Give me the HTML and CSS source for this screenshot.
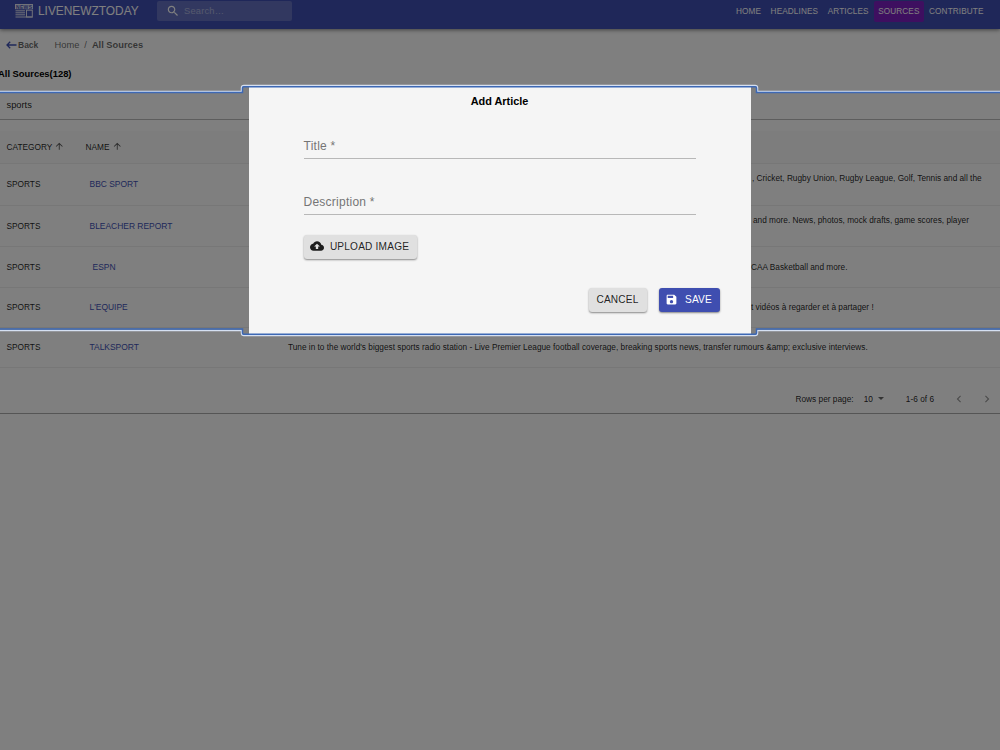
FILE: index.html
```html
<!DOCTYPE html>
<html lang="en">
<head>
    <meta charset="UTF-8">
    <meta name="viewport" content="width=device-width, initial-scale=1.0">
    <title>LIVENEWZTODAY - All Sources</title>
    <link rel="stylesheet" href="styles.css">
</head>
<body>
    <header class="navbar">
        <svg class="logo" viewBox="0 0 18 14">
            <rect x="0" y="0" width="18" height="5.2" fill="#fff"/>
            <text x="1" y="4.6" class="logo-text" textLength="16">NEWS</text>
            <path d="M0.5 6.8h9.5M0.5 8.8h9.5M0.5 10.8h9.5M0.5 13h17" stroke="#fff" stroke-width="1"/>
            <rect x="11.5" y="6.2" width="5.8" height="6.8" fill="none" stroke="#fff" stroke-width="1"/>
        </svg>
        <span class="brand">LIVENEWZTODAY</span>
        <div class="search">
            <svg class="search-icon" viewBox="0 0 24 24"><path d="M15.5 14h-.79l-.28-.27C15.41 12.59 16 11.11 16 9.5 16 5.91 13.09 3 9.5 3S3 5.91 3 9.5 5.91 16 9.5 16c1.61 0 3.09-.59 4.23-1.57l.27.28v.79l5 4.99L20.49 19l-4.99-5zm-6 0C7.01 14 5 11.99 5 9.5S7.01 5 9.5 5 14 7.01 14 9.5 11.99 14 9.5 14z"/></svg>
            <span>Search…</span>
        </div>
        <nav class="nav-links">
            <a>HOME</a>
            <a>HEADLINES</a>
            <a>ARTICLES</a>
            <a class="active">SOURCES</a>
            <a>CONTRIBUTE</a>
        </nav>
    </header>

    <div class="breadcrumbs">
        <svg class="back-icon" viewBox="0 0 11 8"><path d="M4.2 .8L1 4l3.2 3.2M1 4h9.5" fill="none" stroke="#3f51b5" stroke-width="1.3"/></svg>
        <b class="back">Back</b>
        <span class="crumb">Home</span>
        <span class="slash">/</span>
        <b class="current">All Sources</b>
    </div>
    <h1 class="page-title">All Sources(128)</h1>

    <main class="sources">
        <div class="filter">sports</div>
        <div class="row head">
            <div>CATEGORY <svg class="sort" viewBox="0 0 24 24"><path d="M4 12l1.41 1.41L11 7.83V20h2V7.83l5.58 5.59L20 12l-8-8-8 8z"/></svg></div>
            <div class="name-head">NAME <svg class="sort" viewBox="0 0 24 24"><path d="M4 12l1.41 1.41L11 7.83V20h2V7.83l5.58 5.59L20 12l-8-8-8 8z"/></svg></div>
            <div></div>
        </div>
        <div class="row bbc">
            <div>SPORTS</div>
            <a>BBC SPORT</a>
            <p class="end-bbc">, Cricket, Rugby Union, Rugby League, Golf, Tennis and all the</p>
        </div>
        <div class="row bleacher">
            <div>SPORTS</div>
            <a>BLEACHER REPORT</a>
            <p class="end-bleacher">and more. News, photos, mock drafts, game scores, player</p>
        </div>
        <div class="row espn">
            <div>SPORTS</div>
            <a>ESPN</a>
            <p class="end-espn">CAA Basketball and more.</p>
        </div>
        <div class="row equipe">
            <div>SPORTS</div>
            <a>L'EQUIPE</a>
            <p class="end-equipe">t vidéos à regarder et à partager !</p>
        </div>
        <div class="row talk">
            <div>SPORTS</div>
            <a>TALKSPORT</a>
            <p>Tune in to the world's biggest sports radio station - Live Premier League football coverage, breaking sports news, transfer rumours &amp;amp; exclusive interviews.</p>
        </div>
        <div class="pagination">
            <span class="per-page">Rows per page:</span>
            <span class="count">10</span>
            <svg class="caret" viewBox="0 0 10 5"><path d="M0 0l5 5 5-5z"/></svg>
            <span class="range">1-6 of 6</span>
            <svg class="chevron" viewBox="0 0 24 24"><path d="M15.41 16.59L10.83 12l4.58-4.59L14 6l-6 6 6 6z"/></svg>
            <svg class="chevron" viewBox="0 0 24 24"><path d="M8.59 16.59L13.17 12 8.59 7.41 10 6l6 6-6 6z"/></svg>
        </div>
    </main>

    <div class="backdrop">
        <div class="dialog">
            <h2>Add Article</h2>
            <div class="field">Title *</div>
            <div class="field description">Description *</div>
            <button class="btn upload">
                <svg viewBox="0 0 24 24"><path d="M19.35 10.04C18.67 6.59 15.64 4 12 4 9.11 4 6.6 5.64 5.35 8.04 2.34 8.36 0 10.91 0 14c0 3.31 2.69 6 6 6h13c2.76 0 5-2.24 5-5 0-2.64-2.05-4.78-4.65-4.96zM14 13v4h-4v-4H7l5-5 5 5h-3z"/></svg>
                UPLOAD IMAGE
            </button>
            <div class="actions">
                <button class="btn cancel">CANCEL</button>
                <button class="btn save">
                    <svg viewBox="0 0 24 24"><path d="M17 3H5c-1.11 0-2 .9-2 2v14c0 1.1.89 2 2 2h14c1.1 0 2-.9 2-2V7l-4-4zm-5 16c-1.66 0-3-1.34-3-3s1.34-3 3-3 3 1.34 3 3-1.34 3-3 3zm3-10H5V5h10v4z"/></svg>
                    SAVE
                </button>
            </div>
        </div>
        <!-- focus ring around the modal -->
        <svg class="focus-ring" viewBox="0 0 1000 750">
            <path class="ring-light" d="M-5 91.5H241.5V88q0-2.5 2.5-2.5H755q2.5 0 2.5 2.5V91.5H1005V330.5H757.5V333q0 2.5-2.5 2.5H244q-2.5 0-2.5-2.5V330.5H-5z"/>
            <path class="ring-blue" d="M-5 92.5H242.5V88q0-1.2 1.2-1.2H755.3q1.2 0 1.2 1.2V92.5H1005V329H756.5V333q0 1.2-1.2 1.2H243.7q-1.2 0-1.2-1.2V329H-5z"/>
        </svg>
    </div>
</body>
</html>
```
FILE: styles.css
```css
* {
    box-sizing: border-box;
}
body {
    margin: 0;
    height: 750px;
    overflow: hidden;
    background: #fff;
    font-family: "Liberation Sans", Arial, sans-serif;
    color: rgba(0,0,0,0.87);
}
.navbar {
    display: flex;
    align-items: center;
    height: 29px;
    padding: 0 13px 7px 15px;
    background: #3f4eb2;
    color: #fff;
    box-shadow: 0 1px 4px rgba(0,0,0,0.5);
}
.logo {
    width: 18px;
    height: 14px;
    opacity: 0.85;
}
.logo-text {
    font-size: 5px;
    font-weight: bold;
    fill: #3f4eb2;
}
.brand {
    width: 119px;
    margin-left: 5px;
    font-size: 11.9px;
}
.search {
    display: flex;
    align-items: center;
    width: 135px;
    height: 20px;
    padding-left: 10px;
    border-radius: 2px;
    background: #6471c0;
    font-size: 9.3px;
    letter-spacing: 0.2px;
}
.search span {
    opacity: 0.45;
}
.search-icon {
    width: 14px;
    height: 14px;
    margin: 0 4px 0 -1px;
    fill: #fff;
}
.nav-links {
    display: flex;
    margin-left: auto;
    font-size: 8.2px;
    letter-spacing: 0.12px;
}
.nav-links a {
    padding: 6px 4px;
    margin-left: 1.6px;
}
.nav-links a:last-child {
    padding-right: 3.5px;
}
.nav-links .active {
    margin-right: -1px;
    padding-right: 5px;
    border-radius: 2px;
    background: #7d1fc0;
}
.breadcrumbs {
    display: flex;
    align-items: center;
    height: 32px;
    padding-left: 6px;
    font-size: 9.3px;
    color: rgba(0,0,0,0.6);
}
.back-icon {
    width: 11px;
    height: 8px;
    margin-right: 1px;
}
.back {
    width: 36.5px;
    font-size: 8.5px;
}
.slash {
    margin: 0 5px;
}
.page-title {
    height: 31px;
    margin: 0 0 0 -2px;
    font-size: 9.4px;
    line-height: 26px;
    color: #000;
}
.sources {
    height: 322px;
    border-bottom: 1px solid #aaa;
    font-size: 8.3px;
}
.filter {
    height: 28px;
    padding-left: 6.5px;
    border-bottom: 1px solid #bbb;
    font-size: 9.3px;
    line-height: 26px;
}
.row {
    display: grid;
    grid-template-columns: 83px 198.5px 1fr;
    align-items: center;
    padding-left: 6.5px;
    border-bottom: 1px solid #efefef;
}
.row div,
.row a {
    padding-bottom: 2px;
}
.row a {
    font-size: 8.45px;
    color: #3f51b5;
}
.row p {
    margin: 0;
    font-size: 8.27px;
    white-space: nowrap;
}
.head {
    height: 33px;
    margin-top: 11px;
    background: #fafafa;
}
.name-head {
    margin-left: -4px;
}
.sort {
    width: 10.5px;
    height: 10.5px;
    vertical-align: -2px;
    fill: #555;
}
.bbc {
    height: 42px;
}
.bleacher,
.espn {
    height: 41px;
}
.equipe,
.talk {
    height: 40px;
}
.bleacher div,
.bleacher a,
.espn div,
.espn a {
    padding-bottom: 0;
}
.espn a {
    padding-left: 3px;
}
.row .end-bbc {
    margin: 0 0 12px 464px;
}
.row .end-bleacher {
    margin: 0 0 12px 465px;
}
.row .end-espn,
.row .end-equipe {
    margin-left: 463px;
}
.pagination {
    display: flex;
    align-items: center;
    justify-content: flex-end;
    height: 45px;
    padding: 16px 6px 0 0;
}
.count {
    margin: 0 5px 0 10px;
}
.caret {
    width: 6px;
    height: 3px;
    fill: #666;
}
.range {
    margin: 0 18px 0 22px;
}
.chevron {
    width: 14px;
    height: 14px;
    fill: #999;
}
.chevron + .chevron {
    margin-left: 14px;
}
.backdrop {
    position: fixed;
    inset: 0;
    display: flex;
    align-items: flex-start;
    justify-content: center;
    padding-top: 87px;
    background: rgba(0,0,0,0.5);
}
.dialog {
    width: 502px;
    height: 247px;
    padding: 7px 31px 0 55px;
    margin-right: 1px;
    background: #f5f5f5;
}
.dialog h2 {
    margin: 0 24px 0 0;
    font-size: 10.9px;
    line-height: 14px;
    text-align: center;
    color: #000;
}
.field {
    width: 392px;
    height: 33px;
    margin-top: 18px;
    padding-top: 13px;
    border-bottom: 1px solid #b8b8b8;
    font-size: 12px;
    letter-spacing: 0.25px;
    color: #757575;
}
.description {
    margin-top: 23px;
}
.btn {
    display: flex;
    align-items: center;
    justify-content: center;
    height: 24px;
    padding: 0 0 1px;
    border: 0;
    border-radius: 3px;
    background: #e0e0e0;
    font-family: inherit;
    font-size: 10.1px;
    letter-spacing: 0.2px;
    color: rgba(0,0,0,0.87);
    box-shadow: 0 1px 2px rgba(0,0,0,0.45);
}
.btn svg {
    fill: currentColor;
}
.upload {
    width: 113px;
    margin-top: 19.5px;
    padding-right: 1px;
}
.upload svg {
    width: 14px;
    height: 14px;
    margin-right: 6px;
}
.actions {
    display: flex;
    justify-content: flex-end;
    gap: 12px;
    margin-top: 29px;
}
.cancel {
    width: 58px;
}
.save {
    width: 61px;
    padding-right: 1px;
    background: #3f4eb0;
    color: #fff;
}
.save svg {
    width: 13px;
    height: 13px;
    margin-right: 7px;
}
.focus-ring {
    position: absolute;
    inset: 0;
    width: 1000px;
    height: 750px;
    fill: none;
    pointer-events: none;
}
.ring-light {
    stroke: #d5e0f2;
    stroke-width: 1.5;
}
.ring-blue {
    stroke: #3d68b4;
    stroke-width: 1.5;
}
```
